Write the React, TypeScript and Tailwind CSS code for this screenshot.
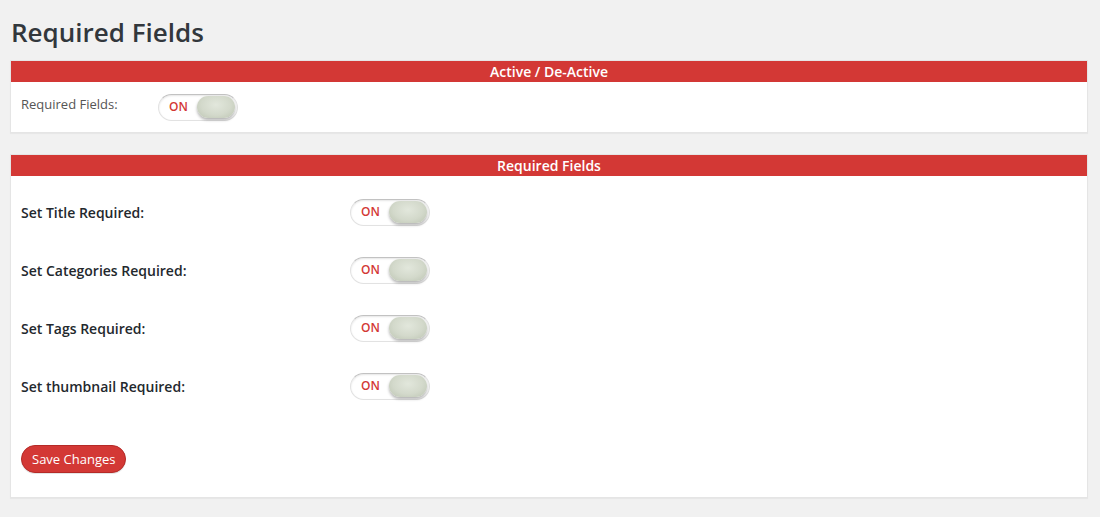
import React from "react";

function Toggle() {
  return (
    <div className="relative w-[80px] h-[27px] rounded-full bg-white border border-[#e2e2e2] border-t-[#c2c2c2] shadow-[inset_0_1px_2px_rgba(0,0,0,0.1)]">
      <span className="absolute left-[10px] top-[5px] text-[12px] leading-[14px] font-semibold text-[#d33835]">ON</span>
      <span className="absolute right-[2px] top-[1px] w-[38px] h-[22px] rounded-full bg-[radial-gradient(ellipse_at_50%_40%,#e2e7dc_0%,#d3d9cb_55%,#bcc4b2_100%)] shadow-[0_2px_3px_rgba(0,0,0,0.3)]" />
    </div>
  );
}

function Row({ label }: { label: string }) {
  return (
    <div className="flex items-center h-[26px]">
      <div className="w-[329px] text-[14px] font-semibold text-[#23282d]">{label}</div>
      <Toggle />
    </div>
  );
}

export default function App() {
  return (
    <div className="min-h-[517px] bg-[#f1f1f1] pl-[10px] pr-[12px] pt-[16px] pb-[20px] text-[#444]" style={{ fontFamily: '"Open Sans", "Noto Sans", sans-serif' }}>
      <h1 className="pl-[1px] text-[26px] leading-[32px] font-semibold text-[#32373c] mb-[12px]">Required Fields</h1>

      <div className="bg-white border border-[#e5e5e5] shadow-[0_1px_1px_rgba(0,0,0,0.04)]">
        <div className="bg-[#d33835] h-[21px] flex items-center justify-center text-white text-[14px] font-semibold">Active / De-Active</div>
        <div className="flex items-center pl-[10px] pt-[12px] pb-[11px]">
          <div className="w-[137px] text-[13px] text-[#555] -mt-[5px]">Required Fields:</div>
          <Toggle />
        </div>
      </div>

      <div className="mt-[21px] bg-white border border-[#e5e5e5] shadow-[0_1px_1px_rgba(0,0,0,0.04)]">
        <div className="bg-[#d33835] h-[21px] flex items-center justify-center text-white text-[14px] font-semibold">Required Fields</div>
        <div className="pl-[10px] pt-[23px] pb-[24px]">
          <div className="flex flex-col gap-[32px]">
            <Row label="Set Title Required:" />
            <Row label="Set Categories Required:" />
            <Row label="Set Tags Required:" />
            <Row label="Set thumbnail Required:" />
          </div>
          <button className="mt-[46px] h-[28px] px-[10px] rounded-full bg-[#d33835] border border-[#b52a27] text-white text-[13px] leading-[26px] shadow-[0_1px_0_rgba(0,0,0,0.1)]">Save Changes</button>
        </div>
      </div>
    </div>
  );
}
